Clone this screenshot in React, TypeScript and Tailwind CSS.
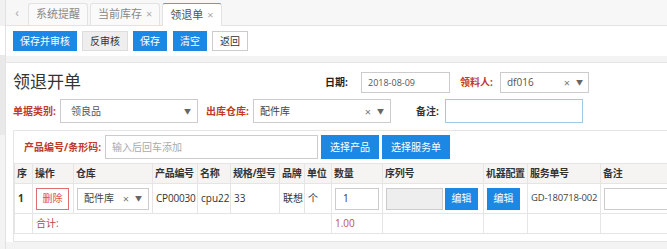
import React from 'react';

const font = { fontFamily: '"Open Sans", "Noto Sans CJK SC", sans-serif' };

const Caret = () => <span className="text-[7px] text-[#666] leading-none">▼</span>;
const Clear = () => <span className="text-[11px] text-[#777] leading-none mr-[6px]">×</span>;

const cell = 'border border-[#e5e5e5] px-[3px] whitespace-nowrap overflow-hidden';

const App: React.FC = () => {
  return (
    <div className="w-[667px] h-[249px] overflow-hidden flex bg-[#f3f3f3] text-[#333]" style={font}>
      <div className="w-[6px] shrink-0 flex flex-col border-r border-[#e2e2e2]">
        <div className="h-[26px] bg-[#f1f1f1]" />
        <div className="h-[29px] bg-white" />
        <div className="h-[80px] bg-[#e9e9e9]" />
        <div className="flex-1 bg-[#f3f3f3]" />
      </div>
      <div className="flex-1 flex flex-col min-w-0">
        {/* tab bar */}
        <div className="h-[26px] flex items-end bg-[#f7f7f7] border-b border-[#e3e3e3]">
          <div className="w-[22px] h-full flex items-center justify-center text-[#aaa] text-[12px]">‹</div>
          <div className="flex items-end gap-[2px]">
            <div className="h-[22px] px-[7px] flex items-center text-[11px] text-[#888] bg-[#fafafa] border border-b-0 border-[#e3e3e3] rounded-t-[3px]">系统提醒</div>
            <div className="h-[22px] px-[7px] flex items-center gap-[4px] text-[11px] text-[#888] bg-[#fafafa] border border-b-0 border-[#e3e3e3] rounded-t-[3px]">当前库存<span className="text-[#aaa] text-[11px]">×</span></div>
            <div className="h-[23px] px-[7px] flex items-center gap-[4px] text-[11px] text-[#555] bg-white border border-b-0 border-[#e3e3e3] border-t-[#6a9bc3] rounded-t-[3px] -mb-px">领退单<span className="text-[#aaa] text-[11px]">×</span></div>
          </div>
        </div>
        {/* toolbar */}
        <div className="h-[30px] bg-white flex items-center gap-[4px] pl-[7px]">
          <button className="h-[20px] px-[7px] text-[10px] text-white bg-[#1d87e4]">保存并审核</button>
          <button className="h-[20px] px-[7px] text-[10px] text-[#333] bg-[#eeeeee] border border-[#ddd] ml-[1px]">反审核</button>
          <button className="h-[20px] px-[7px] text-[10px] text-white bg-[#1d87e4] ml-[1px]">保存</button>
          <button className="h-[20px] px-[7px] text-[10px] text-white bg-[#1d87e4] ml-[2px]">清空</button>
          <button className="h-[20px] px-[7px] text-[10px] text-[#333] bg-white border border-[#ccc] ml-[1px]">返回</button>
        </div>
        <div className="h-[6px]" />
        {/* panel */}
        <div className="bg-white border-t border-[#e5e5e5] h-[180px] flex flex-col pl-[7px]">
          <div className="flex items-end h-[34px]">
            <div className="text-[17px] text-[#333] leading-none pb-[7px] w-[312px]">领退开单</div>
            <div className="flex items-center h-[21px] mb-[4px]">
              <span className="text-[10px] font-bold text-[#222] w-[36px] whitespace-nowrap">日期:</span>
              <div className="w-[89px] h-[21px] border border-[#ccc] flex items-center px-[6px] text-[9px] text-[#555]">2018-08-09</div>
              <span className="text-[10px] font-bold text-[#c0392b] ml-[10px] w-[40px] whitespace-nowrap">领料人:</span>
              <div className="w-[89px] h-[21px] border border-[#ccc] flex items-center pl-[6px] pr-[5px] text-[10px] text-[#555]">
                <span className="flex-1">df016</span><Clear /><Caret />
              </div>
            </div>
          </div>
          <div className="flex items-start h-[33px] pt-[2px]">
            <span className="h-[24px] flex items-center text-[10px] font-bold text-[#c0392b] w-[47px] whitespace-nowrap">单据类别:</span>
            <div className="w-[138px] h-[24px] border border-[#ccc] flex items-center pl-[10px] pr-[6px] text-[10px] text-[#555]">
              <span className="flex-1">领良品</span><Caret />
            </div>
            <span className="h-[24px] flex items-center text-[10px] font-bold text-[#c0392b] ml-[8px] w-[47px] whitespace-nowrap">出库仓库:</span>
            <div className="w-[138px] h-[24px] border border-[#ccc] flex items-center pl-[6px] pr-[6px] text-[10px] text-[#444]">
              <span className="flex-1">配件库</span><Clear /><Caret />
            </div>
            <span className="h-[24px] flex items-center text-[10px] font-bold text-[#333] ml-[25px] w-[29px] whitespace-nowrap">备注:</span>
            <div className="w-[138px] h-[24px] border border-[#9ccbe8]" />
          </div>
          {/* product box */}
          <div className="border-l border-t border-b border-[#e5e5e5] h-[112px] flex flex-col overflow-hidden">
            <div className="flex items-center h-[32px] pl-[10px] shrink-0">
              <span className="text-[10px] font-bold text-[#c0392b] w-[81px] whitespace-nowrap">产品编号/条形码:</span>
              <div className="w-[213px] h-[24px] border border-[#ccc] flex items-center px-[6px] text-[10px] text-[#aaa]">输入后回车添加</div>
              <button className="h-[24px] w-[58px] ml-[3px] text-[10px] text-white bg-[#1d87e4]">选择产品</button>
              <button className="h-[24px] w-[68px] ml-[3px] text-[10px] text-white bg-[#1d87e4]">选择服务单</button>
            </div>
            <table className="border-collapse text-[10px] text-[#333] shrink-0" style={{ tableLayout: 'fixed', width: 700 }}>
              <colgroup>
                <col style={{ width: 18 }} />
                <col style={{ width: 41 }} />
                <col style={{ width: 79 }} />
                <col style={{ width: 45 }} />
                <col style={{ width: 33 }} />
                <col style={{ width: 49 }} />
                <col style={{ width: 25 }} />
                <col style={{ width: 27 }} />
                <col style={{ width: 51 }} />
                <col style={{ width: 101 }} />
                <col style={{ width: 44 }} />
                <col style={{ width: 73 }} />
                <col style={{ width: 114 }} />
              </colgroup>
              <thead>
                <tr className="h-[20px] bg-[#f5f4f3] text-[10px] text-[#333]">
                  {['序', '操作', '仓库', '产品编号', '名称', '规格/型号', '品牌', '单位', '数量', '序列号', '机器配置', '服务单号', '备注'].map((h) => (
                    <th key={h} className="border border-[#e5e5e5] px-[2px] text-left font-bold whitespace-nowrap overflow-hidden tracking-[-0.3px]">{h}</th>
                  ))}
                </tr>
              </thead>
              <tbody>
                <tr className="h-[30px]">
                  <td className={`${cell} font-bold`}>1</td>
                  <td className={cell}>
                    <div className="h-[22px] w-[33px] border border-[#e07070] text-[#e05050] flex items-center justify-center text-[10px]">删除</div>
                  </td>
                  <td className={cell}>
                    <div className="h-[22px] border border-[#ccc] flex items-center pl-[6px] pr-[6px] text-[10px] text-[#444]">
                      <span className="flex-1">配件库</span><Clear /><Caret />
                    </div>
                  </td>
                  <td className={`${cell} px-[2px] tracking-[-0.2px]`}>CP00030</td>
                  <td className={`${cell} px-[2px]`}>cpu22</td>
                  <td className={cell}>33</td>
                  <td className={`${cell} px-[2px]`}>联想</td>
                  <td className={cell}>个</td>
                  <td className={cell}>
                    <div className="h-[22px] border border-[#ccc] flex items-center px-[7px]">1</div>
                  </td>
                  <td className={cell}>
                    <div className="flex gap-[2px]">
                      <div className="h-[22px] w-[57px] bg-[#eeeeee] border border-[#ccc]" />
                      <div className="h-[22px] w-[33px] bg-[#1d87e4] text-white flex items-center justify-center">编辑</div>
                    </div>
                  </td>
                  <td className={cell}>
                    <div className="h-[22px] w-[33px] bg-[#1d87e4] text-white flex items-center justify-center">编辑</div>
                  </td>
                  <td className={`${cell} px-[2px] text-[#444] text-[9.5px] tracking-[-0.2px]`}>GD-180718-002</td>
                  <td className={cell}>
                    <div className="h-[22px] border border-[#ccc]" />
                  </td>
                </tr>
                <tr className="h-[20px]">
                  <td className={cell} />
                  <td colSpan={7} className={`${cell} text-[#b04a45]`}>合计:</td>
                  <td className={`${cell} text-[#c0504a]`}>1.00</td>
                  <td className={cell} />
                  <td className={cell} />
                  <td className={cell} />
                  <td className={cell} />
                </tr>
              </tbody>
            </table>
          </div>
        </div>
      </div>
    </div>
  );
};

export default App;
